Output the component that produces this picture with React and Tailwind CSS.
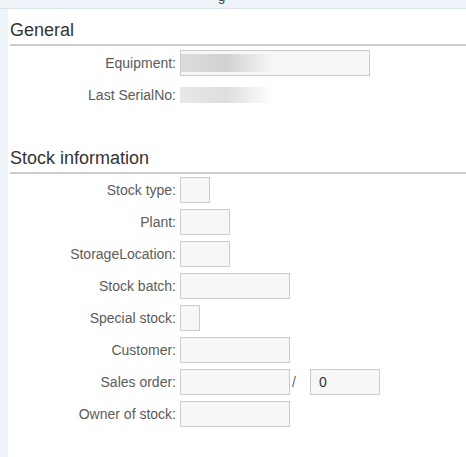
const rows = [
  { label: "Stock type:", w: "w-[30px]" },
  { label: "Plant:", w: "w-[50px]" },
  { label: "StorageLocation:", w: "w-[50px]" },
  { label: "Stock batch:", w: "w-[110px]" },
  { label: "Special stock:", w: "w-[20px]" },
  { label: "Customer:", w: "w-[110px]" },
  { label: "Sales order:", w: "w-[110px]", extra: true },
  { label: "Owner of stock:", w: "w-[110px]" },
];

function Field({ label, children }) {
  return (
    <div className="flex items-center h-[32px]">
      <div className="w-[172px] pr-[4px] text-right text-[14px] text-[#5b5b5b] whitespace-nowrap">{label}</div>
      {children}
    </div>
  );
}

function Box({ w, children }) {
  return (
    <div className={`${w} h-[26px] border border-[#cbcbcb] bg-[#f7f7f7] text-[14px] text-[#333] pl-[8px] flex items-center`}>
      {children}
    </div>
  );
}

function Heading({ children }) {
  return (
    <div className="border-b-2 border-[#cccccc] ml-[2px] pb-[2px]">
      <div className="text-[18px] text-[#333] leading-[24px]">{children}</div>
    </div>
  );
}

export default function App() {
  return (
    <div className="w-[466px] h-[457px] bg-[#eff4f9] overflow-hidden font-['Liberation_Sans',Arial,sans-serif]">
      <div className="h-[9px] border-b border-[#d8e3ee] relative overflow-hidden">
        <span className="absolute left-[218px] top-[-11px] text-[13px] text-[#333] leading-[15px]">g</span>
      </div>
      <div className="ml-[8px] bg-white h-[448px]">
        <div className="pt-[9px]">
          <Heading>General</Heading>
        </div>
        <div className="pt-[1px]">
          <Field label="Equipment:">
            <div className="w-[190px] h-[26px] border border-[#cbcbcb] bg-[#f7f7f7] flex items-center">
              <div className="w-[92px] h-[18px] bg-gradient-to-r from-[#dcdcdc] via-[#d2d2d2] to-[#f7f7f7]" />
            </div>
          </Field>
          <Field label="Last SerialNo:">
            <div className="w-[93px] h-[16px] bg-gradient-to-r from-[#e8e8e8] via-[#dedede] to-white" />
          </Field>
        </div>
        <div className="pt-[35px]">
          <Heading>Stock information</Heading>
        </div>
        <div className="pt-[0px]">
          {rows.map((r) => (
            <Field key={r.label} label={r.label}>
              <Box w={r.w} />
              {r.extra && (
                <>
                  <span className="ml-[2px] w-[18px] text-[14px] text-[#666]">/</span>
                  <Box w="w-[70px]">0</Box>
                </>
              )}
            </Field>
          ))}
        </div>
      </div>
    </div>
  );
}
